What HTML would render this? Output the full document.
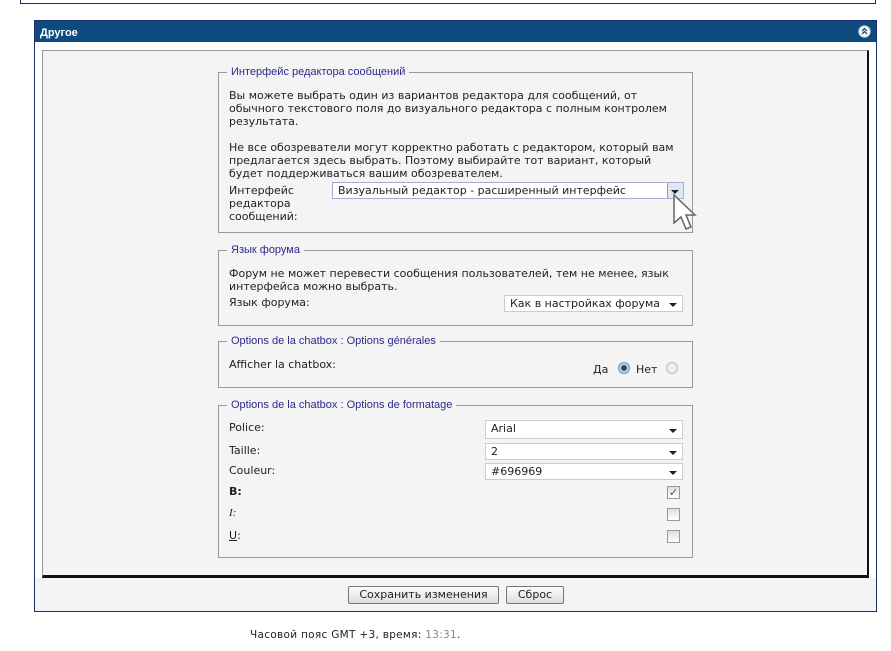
<!DOCTYPE html>
<html><head><meta charset="utf-8"><style>
*{margin:0;padding:0;box-sizing:border-box}
body{width:891px;height:651px;background:#fff;position:relative;overflow:hidden;font-family:"DejaVu Sans",Verdana,sans-serif;font-size:11px;color:#222}
.a{position:absolute}
.top{left:20px;top:-2px;width:856px;height:6px;border:1px solid #1c2d6a;border-top:none}
.outer{left:34px;top:20px;width:843px;height:592px;border:1px solid #1c2d6a;background:#fff}
.hdr{left:35px;top:21px;width:841px;height:21px;background:#0d4a7e;color:#fff;font-family:"Liberation Sans",sans-serif;font-weight:bold;font-size:11px;padding:6px 0 0 5px}
.inner{left:42px;top:50px;width:827px;height:528px;background:#f4f4f4;border:1px solid #999;border-right:2px solid #111;border-bottom:3px solid #111}
.bot{left:35px;top:578px;width:841px;height:33px;background:#f4f4f4}
.fs{position:absolute;left:218px;width:475px;border:1px solid #999}
.lg{position:absolute;left:8px;top:-7px;background:#f4f4f4;padding:0 4px;font-family:"Liberation Sans",sans-serif;font-size:11px;color:#2b2b8c}
.t{position:absolute;left:10px;line-height:13px;white-space:nowrap}
.sel{position:absolute;background:#fff;border:1px solid #ccc;height:17px;padding:1px 5px;line-height:13px;white-space:nowrap}
.arr{position:absolute;right:5px;top:7px;width:0;height:0;border-left:4px solid transparent;border-right:4px solid transparent;border-top:4px solid #222}
.cb{position:absolute;left:448px;width:13px;height:13px;border:1px solid #999;background:linear-gradient(#ddd,#fff)}
.btn{position:absolute;top:586px;height:18px;border:1px solid #777;border-radius:2px;background:linear-gradient(#fdfdfd,#ddd);font-size:11px;text-align:center;line-height:16px}
</style></head><body>
<div class="a top"></div>
<div class="a outer"></div>
<div class="a hdr">Другое</div>
<svg class="a" style="left:858px;top:25px" width="13" height="13" viewBox="0 0 13 13"><circle cx="6.5" cy="6.5" r="5.8" fill="#fff" stroke="#bbb"/><path d="M4 6 L6.5 3.5 L9 6 M4 9 L6.5 6.5 L9 9" fill="none" stroke="#0d4a7e" stroke-width="1.3"/></svg>
<div class="a inner"></div>
<div class="a bot"></div>

<div class="fs" style="top:72px;height:161px">
 <div class="lg">Интерфейс редактора сообщений</div>
 <div class="t" style="top:16px">Вы можете выбрать один из вариантов редактора для сообщений, от<br>обычного текстового поля до визуального редактора с полным контролем<br>результата.</div>
 <div class="t" style="top:68px">Не все обозреватели могут корректно работать с редактором, который вам<br>предлагается здесь выбрать. Поэтому выбирайте тот вариант, который<br>будет поддерживаться вашим обозревателем.</div>
 <div class="t" style="top:111px">Интерфейс<br>редактора<br>сообщений:</div>
 <div class="sel" style="left:113px;top:109px;width:352px;border-color:#aac">Визуальный редактор - расширенный интерфейс<div style="position:absolute;right:0;top:0;width:16px;height:15px;background:#dde8f4;border-left:1px solid #99b"></div><div class="arr" style="right:4px"></div></div>
 <svg class="a" style="left:453px;top:120px" width="26" height="40" viewBox="0 0 26 40"><path d="M2 2 L2 30 L9 24 L14 36 L19 34 L14 22 L23 22 Z" fill="#fff" stroke="#666" stroke-width="1.5"/></svg>
</div>

<div class="fs" style="top:250px;height:76px">
 <div class="lg">Язык форума</div>
 <div class="t" style="top:16px">Форум не может перевести сообщения пользователей, тем не менее, язык<br>интерфейса можно выбрать.</div>
 <div class="t" style="top:45px">Язык форума:</div>
 <div class="sel" style="left:285px;top:44px;width:179px">Как в настройках форума<div class="arr"></div></div>
</div>

<div class="fs" style="top:341px;height:47px">
 <div class="lg">Options de la chatbox : Options générales</div>
 <div class="t" style="top:16px">Afficher la chatbox:</div>
 <div class="t" style="left:374px;top:21px">Да</div>
 <div class="a" style="left:399px;top:20px;width:12px;height:12px;border-radius:50%;border:1px solid #789;background:radial-gradient(#245 0 2px,#8ac 3px,#eef 5px)"></div>
 <div class="t" style="left:417px;top:21px">Нет</div>
 <div class="a" style="left:447px;top:20px;width:12px;height:12px;border-radius:50%;border:1px solid #bbb;background:#eee"></div>
</div>

<div class="fs" style="top:405px;height:153px">
 <div class="lg">Options de la chatbox : Options de formatage</div>
 <div class="t" style="top:15px">Police:</div>
 <div class="sel" style="left:266px;top:14px;width:198px;height:19px">Arial<div class="arr" style="top:8px"></div></div>
 <div class="t" style="top:38px">Taille:</div>
 <div class="sel" style="left:266px;top:37px;width:198px">2<div class="arr"></div></div>
 <div class="t" style="top:58px">Couleur:</div>
 <div class="sel" style="left:266px;top:57px;width:198px">#696969<div class="arr"></div></div>
 <div class="t" style="top:79px;font-weight:bold">B:</div>
 <div class="cb" style="top:80px;color:#456;font-size:11px;line-height:11px;text-align:center">✓</div>
 <div class="t" style="top:101px;font-style:italic;font-family:'Liberation Serif',serif">I:</div>
 <div class="cb" style="top:102px"></div>
 <div class="t" style="top:123px"><u>U</u>:</div>
 <div class="cb" style="top:124px"></div>
</div>

<div class="btn" style="left:348px;width:151px">Сохранить изменения</div>
<div class="btn" style="left:506px;width:58px">Сброс</div>
<div class="a" style="left:250px;top:629px;font-size:10.5px;letter-spacing:0.3px">Часовой пояс GMT +3, время: <span style="color:#888">13:31</span>.</div>
</body></html>
